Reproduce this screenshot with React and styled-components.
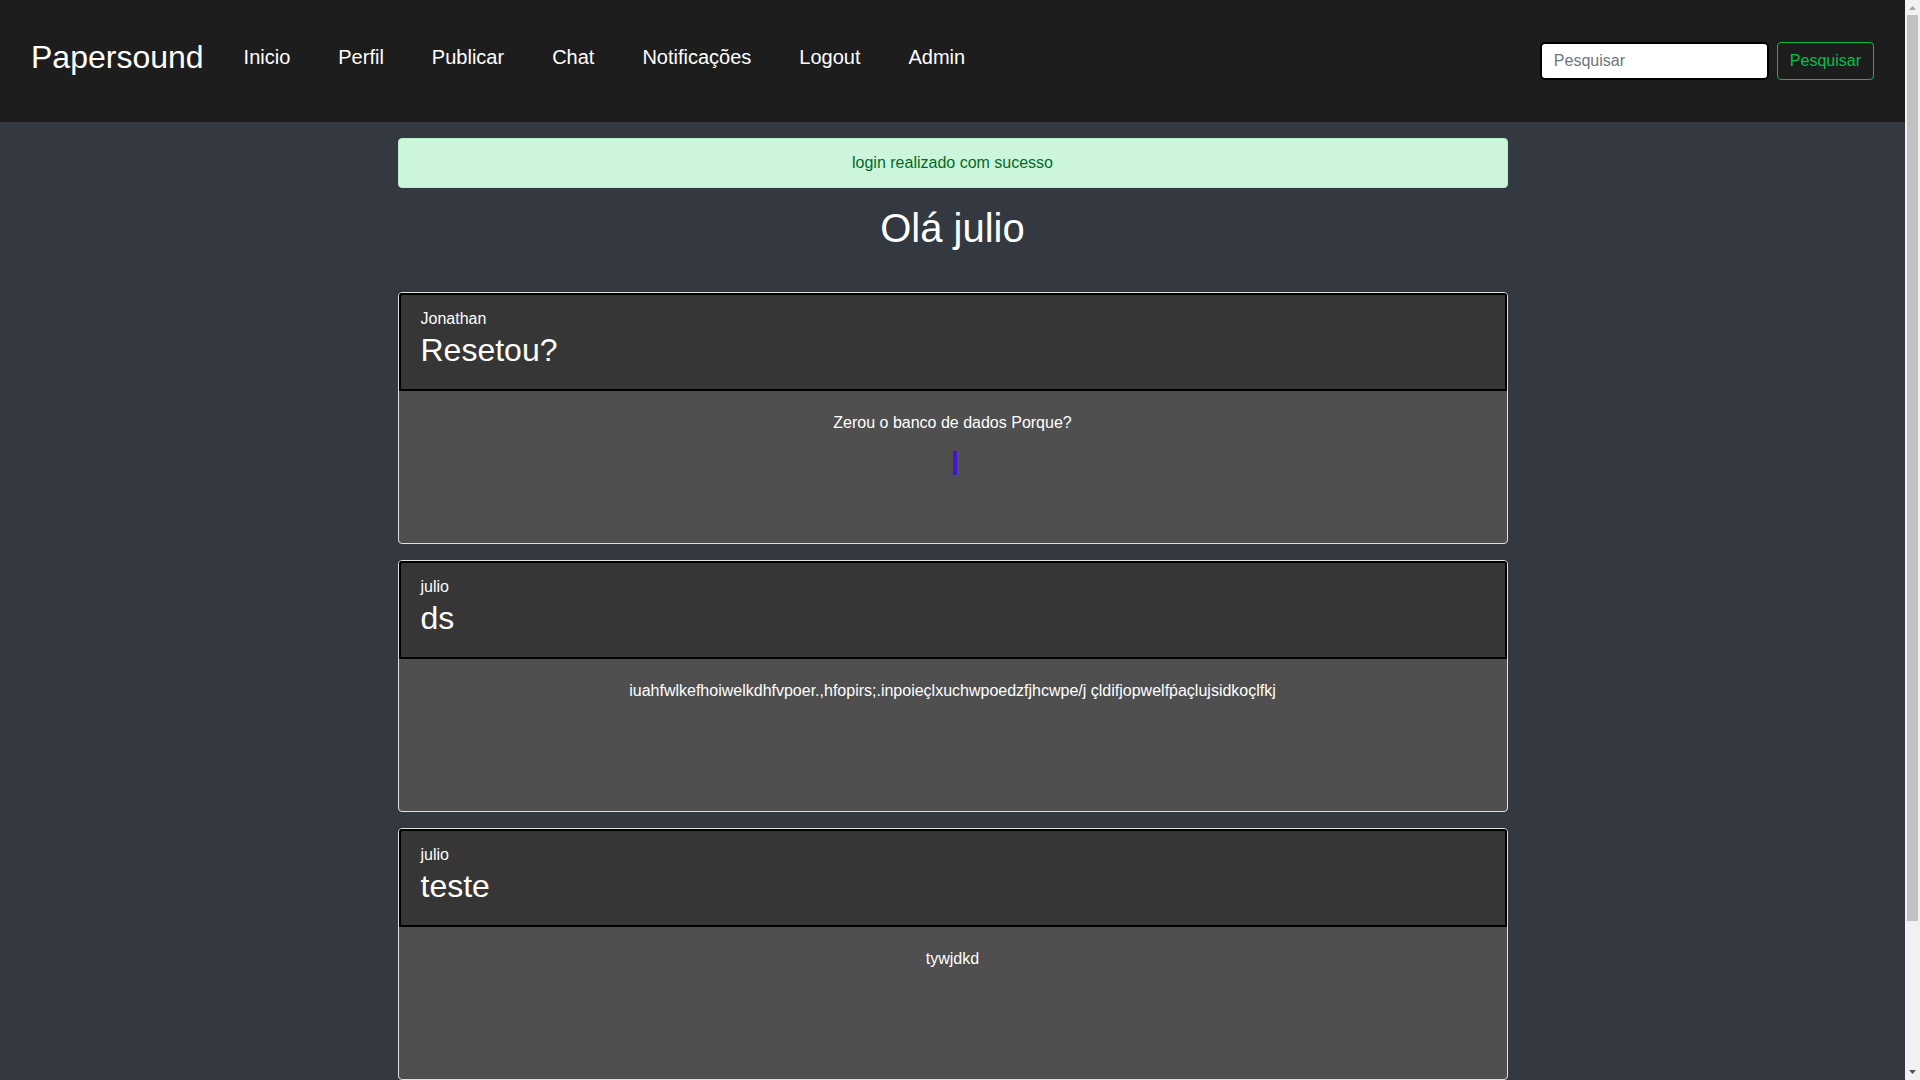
import React from "react";
import styled, { createGlobalStyle } from "styled-components";

const GlobalStyle = createGlobalStyle`
  *, *::before, *::after { box-sizing: border-box; }
  body {
    margin: 0;
    background: #343840;
    color: #fff;
    font-family: "Liberation Sans", Arial, sans-serif;
    font-size: 16px;
    line-height: 24px;
  }
  h1, h2, p, ul { margin: 0; padding: 0; font-weight: 400; }
`;

const Shell = styled.div`
  display: flex;
  height: 100vh;
  overflow: hidden;
`;

const Page = styled.div`
  flex: 1;
  min-width: 0;
`;

const Navbar = styled.nav`
  display: flex;
  align-items: center;
  justify-content: space-between;
  min-height: 122px;
  padding: 0 31px;
  background: #1d1d1d;
`;

const NavLeft = styled.div`
  display: flex;
  align-items: center;
  gap: 40px;
  margin-bottom: 8px;
`;

const Brand = styled.a`
  color: #fff;
  font-size: 32px;
  line-height: 48px;
  text-decoration: none;
`;

const NavList = styled.ul`
  display: flex;
  gap: 48px;
  list-style: none;
`;

const NavLink = styled.a`
  color: #fff;
  font-size: 20px;
  line-height: 30px;
  text-decoration: none;
`;

const SearchForm = styled.form`
  display: flex;
  gap: 8px;
`;

const SearchInput = styled.input`
  width: 229px;
  height: 38px;
  padding: 6px 12px;
  border: 2px solid #000;
  border-radius: 5px;
  background: #fff;
  color: #495057;
  font: inherit;
  &::placeholder { color: #6c757d; opacity: 1; }
`;

const SearchButton = styled.button`
  height: 38px;
  padding: 0 12px;
  border: 1px solid #00c04a;
  border-radius: 4px;
  background: transparent;
  color: #00c04a;
  font: inherit;
`;

const Container = styled.main`
  display: flex;
  flex-direction: column;
  gap: 16px;
  max-width: 1140px;
  margin: 0 auto;
  padding: 16px 15px;
`;

const Alert = styled.div`
  padding: 12px 20px;
  border: 1px solid #b8f0cd;
  border-radius: 4px;
  background: #ccf5db;
  color: #006a27;
  text-align: center;
`;

const Greeting = styled.h1`
  margin-bottom: 24px;
  font-size: 40px;
  line-height: 48px;
  text-align: center;
`;

const Card = styled.article`
  border: 1px solid #dfdfdf;
  border-radius: 4px;
  background: #4f4f4f;
`;

const CardHeader = styled.header`
  min-height: 98px;
  padding: 12px 20px;
  border: 2px solid #000;
  border-radius: 3px 3px 0 0;
  background: #363636;
`;

const CardTitle = styled.h2`
  font-size: 32px;
  line-height: 38px;
`;

const CardBody = styled.div`
  min-height: 152px;
  padding: 20px;
  text-align: center;
`;

const Marker = styled.div`
  width: 4px;
  height: 24px;
  margin: 16px 0 0 50%;
  background: #4413d8;
`;

const Scrollbar = styled.div`
  display: flex;
  flex-direction: column;
  align-items: center;
  width: 15px;
  background: #f1f1f1;
`;

const ScrollArrow = styled.svg`
  display: block;
  width: 15px;
  height: 15px;
`;

const ScrollTrack = styled.div`
  flex: 1;
  width: 11px;
`;

const ScrollThumb = styled.div`
  height: 86.3%;
  background: #c1c1c1;
`;

const links = ["Inicio", "Perfil", "Publicar", "Chat", "Notificações", "Logout", "Admin"];

const posts = [
  { author: "Jonathan", title: "Resetou?", text: "Zerou o banco de dados Porque?", marker: true },
  {
    author: "julio",
    title: "ds",
    text: "iuahfwlkefhoiwelkdhfvpoer.,hfopirs;.inpoieçlxuchwpoedzfjhcwpe/j çldifjopwelfṕaçlujsidkoçlfkj",
  },
  { author: "julio", title: "teste", text: "tywjdkd" },
];

export default function App() {
  return (
    <>
      <GlobalStyle />
      <Shell>
        <Page>
          <Navbar>
            <NavLeft>
              <Brand href="#">Papersound</Brand>
              <NavList>
                {links.map((label) => (
                  <li key={label}>
                    <NavLink href="#">{label}</NavLink>
                  </li>
                ))}
              </NavList>
            </NavLeft>
            <SearchForm>
              <SearchInput type="search" placeholder="Pesquisar" aria-label="Pesquisar" />
              <SearchButton type="submit">Pesquisar</SearchButton>
            </SearchForm>
          </Navbar>
          <Container>
            <Alert role="alert">login realizado com sucesso</Alert>
            <Greeting>Olá julio</Greeting>
            {posts.map((post) => (
              <Card key={post.title}>
                <CardHeader>
                  <p>{post.author}</p>
                  <CardTitle>{post.title}</CardTitle>
                </CardHeader>
                <CardBody>
                  <p>{post.text}</p>
                  {post.marker && <Marker />}
                </CardBody>
              </Card>
            ))}
          </Container>
        </Page>
        <Scrollbar aria-hidden="true">
          <ScrollArrow viewBox="0 0 15 15">
            <path d="M4 10h7L7.5 6z" fill="#a3a3a3" />
          </ScrollArrow>
          <ScrollTrack>
            <ScrollThumb />
          </ScrollTrack>
          <ScrollArrow viewBox="0 0 15 15">
            <path d="M4 5h7L7.5 9z" fill="#505050" />
          </ScrollArrow>
        </Scrollbar>
      </Shell>
    </>
  );
}
